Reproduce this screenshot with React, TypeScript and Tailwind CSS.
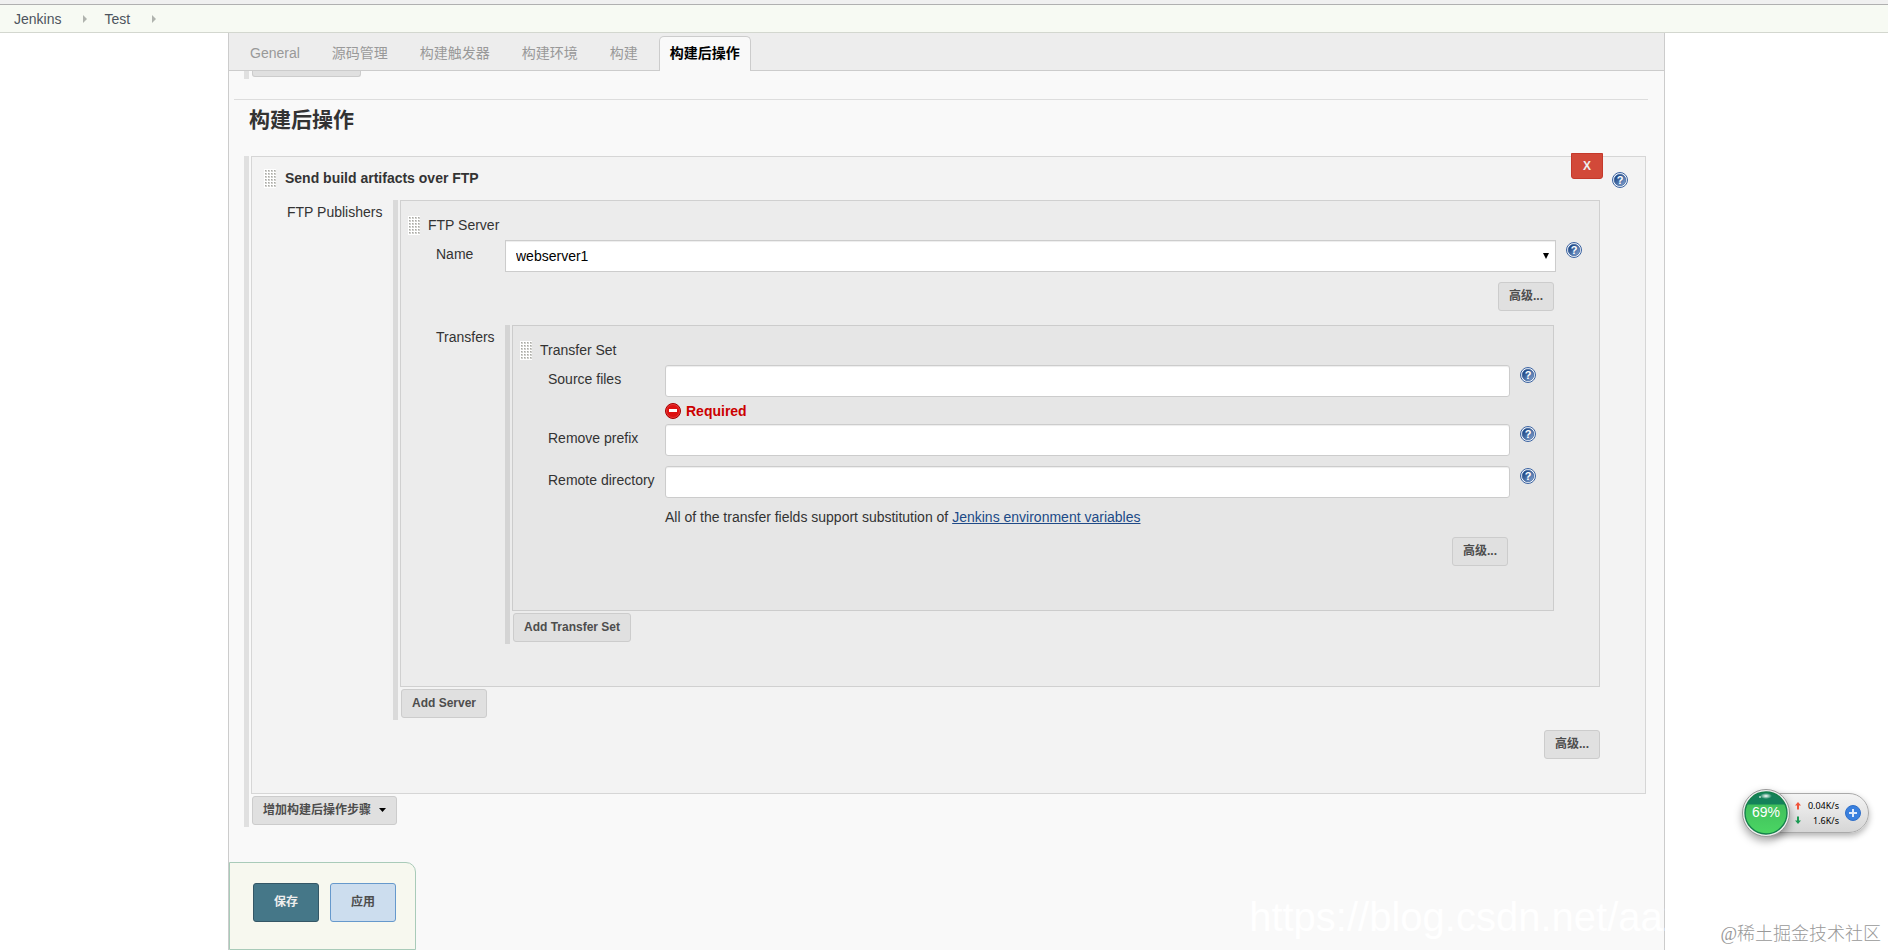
import React from 'react';
import clsx from 'clsx';

const TABS = ['General', '源码管理', '构建触发器', '构建环境', '构建', '构建后操作'];
const ACTIVE_TAB = '构建后操作';

const HelpIcon = ({ label }: { label: string }) => (
  <button type="button" aria-label={`Help for ${label}`} className="block h-4 w-4 shrink-0">
    <svg viewBox="0 0 16 16" className="block h-4 w-4">
      <defs>
        <linearGradient id="help-fill" x1="0" y1="0" x2="1" y2="1">
          <stop offset="0.2" stopColor="#204a87" />
          <stop offset="1" stopColor="#8aa9d6" />
        </linearGradient>
      </defs>
      <circle cx="8" cy="8" r="7.5" fill="#f4f7fb" stroke="#3a62a0" />
      <circle cx="8" cy="8" r="5.8" fill="url(#help-fill)" stroke="#2c5594" strokeWidth="0.6" />
      <text x="8" y="12" textAnchor="middle" fontSize="11" fontWeight="700" fill="#fff" fontFamily="Liberation Sans, sans-serif">?</text>
    </svg>
  </button>
);

const ErrorIcon = () => (
  <svg viewBox="0 0 16 16" className="h-4 w-4 shrink-0" aria-hidden="true">
    <circle cx="8" cy="8" r="7.5" fill="#dd1111" stroke="#a40000" />
    <circle cx="8" cy="8" r="6.5" fill="none" stroke="#e84a4a" strokeWidth="0.7" />
    <rect x="4" y="6" width="8" height="3" fill="#fff" />
  </svg>
);

const DragHandle = () => (
  <svg viewBox="0 0 12 19" className="h-[19px] w-3 shrink-0" aria-hidden="true">
    <defs>
      <pattern id="grip" width="3" height="3" patternUnits="userSpaceOnUse">
        <rect width="3" height="3" fill="#fff" />
        <rect x="1" y="1" width="2" height="2" fill="#cfcfcb" />
        <rect x="1" y="1" width="1" height="1" fill="#a8a8a4" />
      </pattern>
    </defs>
    <rect width="12" height="19" fill="url(#grip)" />
  </svg>
);

const Crumb = ({ children }: { children: React.ReactNode }) => (
  <li className="flex items-center">
    <a href="#" className="text-[#4d545d]">{children}</a>
    <svg viewBox="0 0 4 8" className="mr-[17px] ml-[22px] h-2 w-1" aria-hidden="true">
      <path d="M0 0 L4 4 L0 8 Z" fill="#b0b3ae" />
    </svg>
  </li>
);

const GreyButton = ({ children }: { children: React.ReactNode }) => (
  <button type="button" className="flex h-[29px] items-center rounded-[3px] border border-[#ccc] bg-[#e0e0e0] px-2.5 pb-0.5 text-xs font-bold whitespace-nowrap text-[#4d4d4d]">
    {children}
  </button>
);

const AdvancedRow = () => (
  <div className="flex justify-end pt-2.5 pr-[45px]">
    <GreyButton>高级...</GreyButton>
  </div>
);

interface RepeatableProps {
  barClass: string;
  boxClass: string;
  addButton: React.ReactNode;
  children: React.ReactNode;
}

// Grey rail on the left, the bordered chunk next to it and the "add" button under the chunk
const Repeatable = ({ barClass, boxClass, addButton, children }: RepeatableProps) => (
  <div className="flex min-w-0 flex-1 gap-0.5">
    <div className={clsx('w-[5px] shrink-0', barClass)} />
    <div className="min-w-0 flex-1">
      <div className={clsx('relative border', boxClass)}>{children}</div>
      <div className="flex py-0.5 pl-px">{addButton}</div>
    </div>
  </div>
);

const ChunkTitle = ({ children }: { children: React.ReactNode }) => (
  <div className="flex h-5 items-start gap-2 pl-[7px]">
    <DragHandle />
    <span className="leading-[19px]">{children}</span>
  </div>
);

const TextField = ({ id, label }: { id: string; label: string }) => (
  <div className="flex pr-[17px]">
    <label htmlFor={id} className="w-[152px] shrink-0 pt-1 pl-[35px]">{label}</label>
    <input id={id} type="text" className="mr-2.5 h-8 min-w-0 flex-1 rounded-[3px] border border-[#ccc] bg-white px-2.5 text-black shadow-[inset_0_1px_1px_rgba(0,0,0,0.075)] outline-none" />
    <div className="pt-0.5">
      <HelpIcon label={label} />
    </div>
  </div>
);

const TransferSet = () => (
  <div className="pt-[15px] pb-11">
    <ChunkTitle>Transfer Set</ChunkTitle>
    <div className="pt-1">
      <TextField id="source-files" label="Source files" />
      <div className="flex items-start gap-[5px] pt-1.5 pb-[5px] pl-[152px]">
        <ErrorIcon />
        <span className="leading-4 font-bold text-[#c00]">Required</span>
      </div>
      <TextField id="remove-prefix" label="Remove prefix" />
      <div className="h-2.5" />
      <TextField id="remote-directory" label="Remote directory" />
    </div>
    <p className="pt-[9px] pl-[152px]">
      All of the transfer fields support substitution of{' '}
      <a href="#" className="text-[#204a87] underline">Jenkins environment variables</a>
    </p>
    <AdvancedRow />
  </div>
);

const FtpServer = () => (
  <div className="pt-[15px] pb-[42px]">
    <ChunkTitle>FTP Server</ChunkTitle>
    <div className="flex pt-1 pr-[17px]">
      <label htmlFor="server-name" className="w-[104px] shrink-0 pt-1 pl-[35px]">Name</label>
      <div className="relative mr-2.5 min-w-0 flex-1">
        <select id="server-name" className="block h-8 w-full appearance-none border border-[#ccc] bg-white px-2.5 text-black shadow-[inset_0_1px_1px_rgba(0,0,0,0.075)] outline-none">
          <option>webserver1</option>
        </select>
        <svg viewBox="0 0 6 6" className="pointer-events-none absolute top-[13px] right-[7px] h-1.5 w-1.5" aria-hidden="true">
          <path d="M0 0 H6 L3 6 Z" fill="#000" />
        </svg>
      </div>
      <div className="pt-0.5">
        <HelpIcon label="Name" />
      </div>
    </div>
    <AdvancedRow />
    <div className="flex pt-3.5 pr-[45px]">
      <div className="w-[104px] shrink-0 pt-0.5 pl-[35px]">Transfers</div>
      <Repeatable barClass="bg-[#d4d4d4]" boxClass="border-[#ccc] bg-[#e6e6e6]" addButton={<GreyButton>Add Transfer Set</GreyButton>}>
        <TransferSet />
      </Repeatable>
    </div>
  </div>
);

const FtpPublisher = () => (
  <div className="pb-[34px]">
    <button type="button" aria-label="Delete" className="absolute -top-1 right-[42px] h-[26px] w-8 rounded-b-[3px] border border-[#c4392b] bg-[#d24939] text-xs font-bold text-[#eee]">
      X
    </button>
    <div className="flex items-end gap-[9px] py-3 pr-[17px] pl-3">
      <DragHandle />
      <b className="leading-[19px]">Send build artifacts over FTP</b>
      <div className="ml-auto">
        <HelpIcon label="Send build artifacts over FTP" />
      </div>
    </div>
    <div className="flex pr-[45px]">
      <div className="w-[141px] shrink-0 pt-0.5 pl-[35px]">FTP Publishers</div>
      <Repeatable barClass="bg-[#dadada]" boxClass="border-[#d0d0d0] bg-[#ececec]" addButton={<GreyButton>Add Server</GreyButton>}>
        <FtpServer />
      </Repeatable>
    </div>
    <AdvancedRow />
  </div>
);

const SpeedWidget = () => (
  <div className="absolute right-[19px] bottom-[113px] flex items-center">
    <div className="relative z-10 -mr-5 flex h-12 w-12 items-center justify-center rounded-full border border-[#999] bg-[#eee] shadow-[0_4px_8px_rgba(0,0,0,0.35)]">
      <svg viewBox="0 0 44 44" className="absolute h-11 w-11" aria-hidden="true">
        <defs>
          <linearGradient id="gauge" x1="0" y1="0" x2="0" y2="1">
            <stop offset="0" stopColor="#3cb55a" />
            <stop offset="1" stopColor="#4bd763" />
          </linearGradient>
          <radialGradient id="gloss">
            <stop offset="0" stopColor="#fff" />
            <stop offset="1" stopColor="#fff" stopOpacity="0" />
          </radialGradient>
          <clipPath id="gauge-clip">
            <circle cx="22" cy="22" r="21" />
          </clipPath>
        </defs>
        <g clipPath="url(#gauge-clip)">
          <rect width="44" height="44" fill="url(#gauge)" />
          <rect width="44" height="13.5" fill="#14815a" />
          <ellipse cx="22" cy="5" rx="6" ry="3" fill="url(#gloss)" />
          <circle cx="16" cy="6" r="1" fill="#b9dccd" />
        </g>
        <circle cx="22" cy="22" r="21" fill="none" stroke="#15804c" strokeWidth="1.4" />
      </svg>
      <span className="relative pb-0.5 text-sm text-white">69%</span>
    </div>
    <div className="flex h-10 w-[99px] items-center rounded-r-full border border-[#aaa] bg-linear-to-b from-[#f4f4f4] to-[#d6d6d6] pr-[7px] pl-6 shadow-[0_3px_6px_rgba(0,0,0,0.3)]">
      <svg viewBox="0 0 6 24" className="h-6 w-1.5 shrink-0" aria-hidden="true">
        <path d="M3 1 L6 4.500 H4 V8.500 H2 V4.500 H0 Z" fill="#f0533a" />
        <path d="M3 23 L6 19.500 H4 V15.500 H2 V19.500 H0 Z" fill="#1c9c54" />
      </svg>
      <div className="flex-1 pr-1.5 text-right font-['Noto_Sans',sans-serif] text-[9px] leading-[15px] whitespace-nowrap text-black">
        <div>0.04K/s</div>
        <div>1.6K/s</div>
      </div>
      <svg viewBox="0 0 16 16" className="h-4 w-4 shrink-0" aria-hidden="true">
        <circle cx="8" cy="8" r="7.500" fill="#3a80de" stroke="#2f6fc8" />
        <path d="M8 4 V12 M4 8 H12" stroke="#dfeafa" strokeWidth="2" />
      </svg>
    </div>
  </div>
);

export default function App() {
  return (
    <div className="relative flex min-h-screen flex-col overflow-hidden bg-white font-['Liberation_Sans','Noto_Sans_CJK_SC',sans-serif] text-sm leading-5 text-[#333]">
      <header>
        <div className="h-[5px] border-b border-[#b0b0b0] bg-[#f0f0f0]" />
        <nav className="h-7 border-b border-[#d3d7cf] bg-[#f7faf3] pl-3.5">
          <ul className="flex h-full items-center">
            <Crumb>Jenkins</Crumb>
            <Crumb>Test</Crumb>
          </ul>
        </nav>
      </header>

      <main className="mr-[223px] ml-[228px] flex flex-1 flex-col border-x border-[#ccc] bg-[#f9f9f9]">
        <div className="flex h-[38px] items-end gap-2.5 border-b border-[#ccc] bg-[#ededed] pl-2.5">
          {TABS.map((tab) => (
            <a
              key={tab}
              href="#"
              className={clsx(
                '-mb-px flex h-[35px] items-center rounded-t-[5px] border border-b-0 px-2.5 pb-0.5 whitespace-nowrap',
                tab === ACTIVE_TAB ? 'border-[#ccc] bg-[#f9f9f9] font-bold text-black' : 'border-transparent text-[#999]'
              )}
            >
              {tab}
            </a>
          ))}
        </div>

        {/* tail of the previous section, scrolled under the tab bar */}
        <div className="flex gap-[3px] pl-[15px]" aria-hidden="true">
          <div className="h-2 w-[5px] bg-[#e0e0e0]" />
          <div className="h-1.5 w-[109px] rounded-b-[3px] border border-t-0 border-[#ccc] bg-[#e0e0e0]" />
        </div>

        <h2 className="mt-5 mr-4 ml-[5px] h-[57px] border-t border-[#ddd] pt-1 pl-[15px] text-[21px] leading-8 font-bold">构建后操作</h2>

        <div className="flex pr-[18px] pl-[15px]">
          <Repeatable
            barClass="bg-[#e0e0e0]"
            boxClass="border-[#d6d6d6] bg-[#f3f3f3]"
            addButton={
              <GreyButton>
                增加构建后操作步骤
                <svg viewBox="0 0 7 4" className="ml-2 h-1 w-[7px]" aria-hidden="true">
                  <path d="M0 0 H7 L3.500 4 Z" fill="#000" />
                </svg>
              </GreyButton>
            }
          >
            <FtpPublisher />
          </Repeatable>
        </div>

        <div className="mt-auto pt-8">
          <div className="flex h-[88px] w-[187px] gap-[11px] rounded-tr-[10px] border border-[#a9cbb9] bg-[#f7f8ef] pt-5 pl-[23px]">
            <button type="submit" className="h-[39px] w-[66px] rounded-[3px] border border-[#345766] bg-[#457788] pb-0.5 text-xs font-bold text-[#eee]">保存</button>
            <button type="button" className="h-[39px] w-[66px] rounded-[3px] border border-[#69c] bg-[#cde] pb-0.5 text-xs font-bold text-[#4d4d4d]">应用</button>
          </div>
        </div>
      </main>

      <SpeedWidget />
      <div className="pointer-events-none absolute right-[203px] bottom-2 text-[40px] leading-[50px] text-white">https://blog.csdn.net/aa2</div>
      <div className="pointer-events-none absolute right-[7px] bottom-1 font-['Liberation_Serif','Noto_Sans_CJK_SC',serif] text-lg leading-6 font-light text-[#999]">@稀土掘金技术社区</div>
    </div>
  );
}
